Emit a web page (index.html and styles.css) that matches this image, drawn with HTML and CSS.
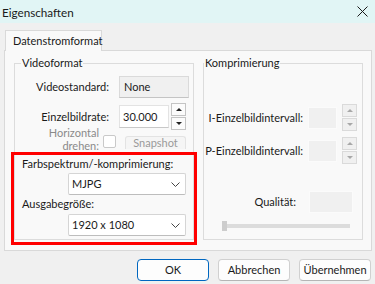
FILE: index.html
```html
<!DOCTYPE html>
<html lang="de">
  <head>
    <meta charset="UTF-8" />
    <title>Eigenschaften</title>
    <link rel="stylesheet" href="styles.css">
  </head>
  <body>
    <div class="titlebar">
      <span class="title">Eigenschaften</span>
      <svg class="close" width="11" height="11" viewBox="0 0 11 11">
        <path d="M0.5 0.5 L10.5 10.5 M10.5 0.5 L0.5 10.5" stroke="#1a1a1a" stroke-width="1" fill="none" />
      </svg>
    </div>

    <div class="dialog">
      <div class="tabs">
        <div class="tab">Datenstromformat</div>
      </div>

      <div class="tab-panel">
        <fieldset class="group group-video">
          <legend>Videoformat</legend>

          <div class="row row-standard">
            <span class="label">Videostandard:</span>
            <span class="readonly">None</span>
          </div>

          <div class="row row-rate">
            <span class="label">Einzelbildrate:</span>
            <span class="input input-rate">30.000</span>
            <div class="spin">
              <button class="spin-btn"><span class="arrow up"></span></button>
              <button class="spin-btn"><span class="arrow down"></span></button>
            </div>
          </div>

          <div class="row row-flip">
            <span class="label label-flip">Horizontal<br>drehen:</span>
            <span class="checkbox"></span>
            <span class="btn-snapshot">Snapshot</span>
          </div>

          <div class="highlight">
            <div class="field-label">Farbspektrum/-komprimierung:</div>
            <div class="select">
              <span>MJPG</span>
              <svg class="chevron" width="9" height="5" viewBox="0 0 9 5"><path d="M0.5 0.5 L4.5 4.5 L8.5 0.5" stroke="#444" fill="none" /></svg>
            </div>
            <div class="field-label field-label-size">Ausgabegröße:</div>
            <div class="select select-size">
              <span>1920 x 1080</span>
              <svg class="chevron" width="9" height="5" viewBox="0 0 9 5"><path d="M0.5 0.5 L4.5 4.5 L8.5 0.5" stroke="#444" fill="none" /></svg>
            </div>
          </div>
        </fieldset>

        <fieldset class="group group-compress">
          <legend>Komprimierung</legend>

          <div class="row row-interval row-i">
            <span class="label label-interval">I-Einzelbildintervall:</span>
            <span class="input input-off"></span>
            <div class="spin spin-off">
              <button class="spin-btn"><span class="arrow up"></span></button>
              <button class="spin-btn"><span class="arrow down"></span></button>
            </div>
          </div>

          <div class="row row-interval row-p">
            <span class="label label-interval">P-Einzelbildintervall:</span>
            <span class="input input-off"></span>
            <div class="spin spin-off">
              <button class="spin-btn"><span class="arrow up"></span></button>
              <button class="spin-btn"><span class="arrow down"></span></button>
            </div>
          </div>

          <div class="row row-quality">
            <span class="label label-quality">Qualität:</span>
            <span class="input input-off input-quality"></span>
          </div>

          <div class="slider">
            <span class="slider-thumb"></span>
          </div>
        </fieldset>
      </div>

      <div class="buttons">
        <button class="btn btn-default">OK</button>
        <button class="btn">Abbrechen</button>
        <button class="btn">Übernehmen</button>
      </div>
    </div>
  </body>
</html>
```

FILE: styles.css
```css
* {
  box-sizing: border-box;
}
body {
  margin: 0;
  width: 375px;
  height: 284px;
  overflow: hidden;
  background-color: #f0f0f0;
  color: #1a1a1a;
  font-family: Lato, "Noto Sans", sans-serif;
  font-size: 11px;
  line-height: 16px;
  white-space: nowrap;
}
button {
  font: inherit;
  color: inherit;
  padding: 0;
}
.titlebar {
  height: 23px;
  display: flex;
  align-items: center;
  justify-content: space-between;
  padding: 0 7px 0 2px;
  background-color: #e1f5f5;
}
.title {
  font-size: 11.7px;
}
.dialog {
  padding: 7px 3px 0 4px;
}
.tabs {
  display: flex;
  padding-left: 1px;
}
.tab {
  position: relative;
  z-index: 1;
  width: 97px;
  height: 21px;
  margin-bottom: -1px;
  padding: 2px 0 0 7px;
  border: 1px solid #d9d9d9;
  border-bottom: none;
  background-color: #f9f9f9;
}
.tab-panel {
  height: 201px;
  display: flex;
  gap: 9px;
  padding: 4px 8px 0 9px;
  border: 1px solid #d9d9d9;
  background-color: #f9f9f9;
}
.group {
  margin: 0;
  padding: 0;
  min-width: 0;
  height: 185px;
  border: 1px solid #dcdcdc;
}
.group legend {
  padding: 0 1px;
  line-height: 16px;
}
.group-video {
  width: 180px;
  flex-shrink: 0;
}
.group-video legend {
  margin-left: 6px;
}
.group-compress {
  width: 161px;
}
.row {
  display: flex;
  align-items: center;
}
.label {
  text-align: right;
}
.row-standard {
  margin-top: 5px;
}
.row-standard .label,
.row-rate .label {
  width: 94px;
  margin-right: 10px;
}
.readonly {
  width: 70px;
  height: 22px;
  padding: 2px 4px;
  background-color: #f0f0f0;
  border: 1px solid #dadada;
  border-bottom-color: #c4c4c4;
}
.row-rate {
  margin-top: 5px;
}
.input {
  height: 23px;
  padding: 3px 3px;
  background-color: #fff;
  border: 1px solid #e3e3e3;
  border-bottom-color: #c8c8c8;
}
.input-rate {
  width: 50px;
}
.spin {
  display: flex;
  flex-direction: column;
  gap: 1px;
  margin-left: 2px;
}
.spin-btn {
  width: 15px;
  height: 13px;
  display: flex;
  align-items: center;
  justify-content: center;
  background-color: #fbfbfb;
  border: 1px solid #c4c4c4;
}
.arrow {
  width: 0;
  height: 0;
  border-left: 3px solid transparent;
  border-right: 3px solid transparent;
}
.arrow.up {
  border-bottom: 3px solid #222;
}
.arrow.down {
  border-top: 3px solid #222;
}
.row-flip {
  align-items: flex-start;
  margin-top: -4px;
  height: 26px;
  color: #8a8a8a;
}
.label-flip {
  width: 84px;
  line-height: 13px;
}
.checkbox {
  width: 13px;
  height: 13px;
  margin: 9px 0 0 4px;
  background-color: #fff;
  border: 1px solid #c9c9c9;
  border-radius: 2px;
}
.btn-snapshot {
  width: 61px;
  height: 13px;
  margin: 10px 0 0 9px;
  line-height: 12px;
  text-align: center;
  color: #9a9a9a;
  background-color: #f5f5f5;
  border: 1px solid #e3e3e3;
  border-bottom: none;
  border-radius: 3px 3px 0 0;
  overflow: hidden;
}
.highlight {
  margin: 0 -4px;
  padding: 1px 0 6px 8px;
  border: 3px solid #ff0000;
}
.field-label {
  height: 16px;
}
.field-label-size {
  margin-top: 1px;
}
.select {
  width: 118px;
  height: 22px;
  margin: 1px 0 0 46px;
  display: flex;
  align-items: center;
  justify-content: space-between;
  padding: 0 3px 0 3px;
  background-color: #fff;
  border: 1px solid #d5d5d5;
  border-bottom-color: #bdbdbd;
  border-radius: 2px;
}
.select-size {
  margin-top: 2px;
}
.chevron {
  margin-right: 2px;
}
.group-compress legend {
  margin-left: 0;
}
.label-interval {
  width: 99px;
  margin-right: 5px;
}
.row-i {
  margin-top: 33px;
}
.row-p {
  margin-top: 6px;
}
.input-off {
  width: 29px;
  height: 22px;
  background-color: #f0f0f0;
  border: 1px solid #fbfbfb;
}
.spin-off {
  margin-left: 5px;
}
.spin-off .spin-btn {
  background-color: #f0f0f0;
  border-color: #dadada;
}
.spin-off .arrow.up {
  border-bottom-color: #a8a8a8;
}
.spin-off .arrow.down {
  border-top-color: #a8a8a8;
}
.row-quality {
  margin-top: 27px;
}
.label-quality {
  width: 92px;
  margin-right: 13px;
}
.input-quality {
  width: 44px;
}
.slider {
  position: relative;
  width: 128px;
  height: 4px;
  margin: 11px 0 0 18px;
  background-color: #dcdcdc;
}
.slider-thumb {
  position: absolute;
  left: 0;
  top: -3px;
  width: 5px;
  height: 10px;
  background-color: #cdcdcd;
}
.buttons {
  display: flex;
  justify-content: flex-end;
  gap: 9px;
  margin-top: 8px;
  padding-right: 1px;
}
.btn {
  width: 72px;
  height: 22px;
  background-color: #fdfdfd;
  border: 1px solid #d0d0d0;
  border-bottom-color: #b5b5b5;
  border-radius: 4px;
}
.btn-default {
  border: 1px solid #0067c0;
}
```
